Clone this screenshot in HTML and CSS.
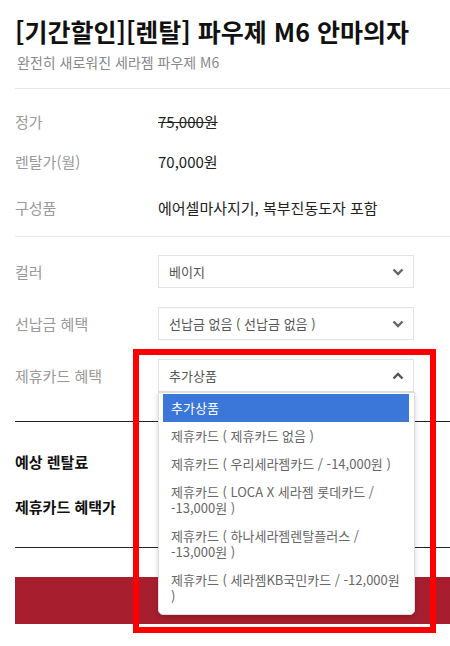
FILE: index.html
```html
<!DOCTYPE html>
<html lang="ko">
<head>
    <meta charset="UTF-8">
    <meta name="viewport" content="width=device-width, initial-scale=1.0">
    <title>파우제 M6 안마의자</title>
    <link rel="stylesheet" href="styles.css">
</head>
<body>
    <div class="page">
        <div class="head">
            <h1>[기간할인][렌탈] 파우제 M6 안마의자</h1>
            <p class="sub">완전히 새로워진 세라젬 파우제 M6</p>
        </div>

        <div class="info">
            <div class="row">
                <span class="label">정가</span>
                <span class="value strike">75,000원</span>
            </div>
            <div class="row">
                <span class="label">렌탈가(월)</span>
                <span class="value">70,000원</span>
            </div>
            <div class="row row-parts">
                <span class="label">구성품</span>
                <span class="value">에어셀마사지기, 복부진동도자 포함</span>
            </div>
        </div>

        <div class="options">
            <div class="opt">
                <span class="label">컬러</span>
                <div class="select">
                    <span>베이지</span>
                    <svg class="chev" width="12" height="8" viewBox="0 0 12 8"><path d="M1.5 1.5 L6 6 L10.5 1.5" fill="none" stroke="#666" stroke-width="2.4"/></svg>
                </div>
            </div>
            <div class="opt">
                <span class="label">선납금 혜택</span>
                <div class="select">
                    <span>선납금 없음 ( 선납금 없음 )</span>
                    <svg class="chev" width="12" height="8" viewBox="0 0 12 8"><path d="M1.5 1.5 L6 6 L10.5 1.5" fill="none" stroke="#666" stroke-width="2.4"/></svg>
                </div>
            </div>
            <div class="opt">
                <span class="label">제휴카드 혜택</span>
                <div class="select open">
                    <span>추가상품</span>
                    <svg class="chev" width="12" height="8" viewBox="0 0 12 8"><path d="M1.5 6.5 L6 2 L10.5 6.5" fill="none" stroke="#555" stroke-width="2.4"/></svg>
                    <ul class="dropdown">
                        <li class="on">추가상품</li>
                        <li>제휴카드 ( 제휴카드 없음 )</li>
                        <li>제휴카드 ( 우리세라젬카드 / -14,000원 )</li>
                        <li>제휴카드 ( LOCA X 세라젬 롯데카드 / -13,000원 )</li>
                        <li>제휴카드 ( 하나세라젬렌탈플러스 / -13,000원 )</li>
                        <li>제휴카드 ( 세라젬KB국민카드 / -12,000원 )</li>
                    </ul>
                </div>
            </div>
        </div>

        <div class="total">
            <div class="row"><span class="tlabel">예상 렌탈료</span></div>
            <div class="row"><span class="tlabel">제휴카드 혜택가</span></div>
        </div>

        <button class="buy" aria-label="렌탈 신청하기"></button>
    </div>

    <div class="mark"></div>
</body>
</html>
```

FILE: styles.css
```css
body {
    margin: 0;
    font-family: "Noto Sans CJK KR", "Noto Sans", sans-serif;
    background: #fff;
    color: #333;
}
.page {
    padding: 14px 0 0 15px;
}
.head {
    padding-bottom: 16px;
    border-bottom: 1px solid #e6e6e6;
}
h1 {
    margin: 0;
    font-size: 25px;
    line-height: 34px;
    font-weight: 700;
    color: #111;
    white-space: nowrap;
}
.sub {
    margin: 4px 0 0 2px;
    font-size: 14px;
    line-height: 20px;
    color: #888;
}
.row {
    display: flex;
    align-items: center;
    height: 20px;
}
.label {
    width: 143px;
    flex: none;
    font-size: 15px;
    color: #999;
}
.value {
    font-size: 15px;
    color: #222;
}
.strike { text-decoration: line-through; }
.info {
    padding: 22px 0 19px;
    border-bottom: 1px solid #e6e6e6;
}
.info .row + .row { margin-top: 20px; }
.info .row-parts { margin-top: 26px !important; }
.options {
    padding: 18px 0 29px;
    border-bottom: 1px solid #222;
}
.opt {
    display: flex;
    align-items: center;
}
.opt + .opt { margin-top: 19px; }
.select {
    position: relative;
    width: 256px;
    height: 33px;
    box-sizing: border-box;
    border: 1px solid #e3e3e3;
    padding: 0 9px 0 10px;
    display: flex;
    align-items: center;
    justify-content: space-between;
    font-size: 13px;
    color: #555;
}
.dropdown {
    position: absolute;
    top: 32px;
    left: -1px;
    width: 257px;
    box-sizing: border-box;
    margin: 0;
    padding: 1px 5px 4px 4px;
    list-style: none;
    background: #fff;
    border: 1px solid #ddd;
    border-radius: 0 0 5px 5px;
    box-shadow: 0 2px 5px rgba(0,0,0,0.18);
    z-index: 5;
}
.dropdown li {
    padding: 6px 8px;
    line-height: 16px;
    font-size: 13px;
    color: #666;
}
.dropdown li.on {
    background: #3a77d8;
    color: #fff;
}
.total {
    padding: 29.5px 0 30.5px;
    border-bottom: 1px solid #222;
}
.total .row + .row { margin-top: 25px; }
.tlabel {
    font-size: 15px;
    font-weight: 700;
    color: #111;
}
.buy {
    display: block;
    width: 100%;
    height: 47px;
    margin-top: 29px;
    border: none;
    background: #a71f2f;
}
.mark {
    position: absolute;
    left: 133px;
    top: 349px;
    width: 303px;
    height: 284px;
    box-sizing: border-box;
    border: 6px solid #ff0000;
    z-index: 10;
}
```
